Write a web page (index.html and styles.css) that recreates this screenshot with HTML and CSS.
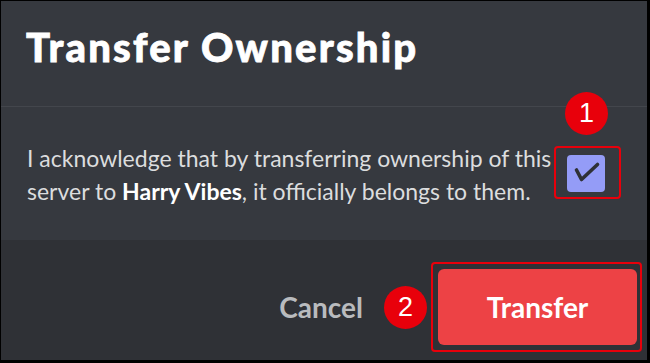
FILE: index.html
```html
<!DOCTYPE html>
<html lang="en">
<head>
    <meta charset="UTF-8">
    <meta name="viewport" content="width=device-width, initial-scale=1.0">
    <title>Transfer Ownership</title>
    <link rel="stylesheet" href="styles.css">
</head>
<body>

<div class="modal">
    <div class="modal-header">
        <h1>Transfer Ownership</h1>
    </div>

    <div class="modal-body">
        <p class="ack">
            <span class="line">I acknowledge that by transferring ownership of this</span>
            <span class="line">server to <strong>Harry Vibes</strong>, it officially belongs to them.</span>
        </p>
        <div class="check-wrap highlight">
            <span class="badge badge-top">1</span>
            <div class="checkbox">
                <svg width="38" height="37" viewBox="0 0 38 37">
                    <path d="M9.5 15 L14.5 24.5 L30.5 9.5" fill="none" stroke="#2f3136" stroke-width="3.6" stroke-linecap="round" stroke-linejoin="round"/>
                </svg>
            </div>
        </div>
    </div>

    <div class="modal-footer">
        <button class="btn-cancel">Cancel</button>
        <span class="badge">2</span>
        <div class="highlight btn-wrap">
            <button class="btn-transfer">Transfer</button>
        </div>
    </div>
</div>

</body>
</html>
```

FILE: styles.css
```css
body {
    margin: 0;
    font-family: Lato, "Liberation Sans", sans-serif;
    background: #000;
}
.modal {
    width: 650px;
    height: 363px;
    box-sizing: border-box;
    border-style: solid;
    border-color: #000;
    border-width: 1px 3px 3px 1px;
    background-color: #36393f;
    display: flex;
    flex-direction: column;
}
.modal-header {
    height: 106px;
    padding: 22px 0 0 25px;
    box-sizing: border-box;
    border-bottom: 1px solid #43464c;
}
.modal-header h1 {
    margin: 0;
    font-size: 40px;
    line-height: 48px;
    font-weight: 900;
    letter-spacing: 2.2px;
    -webkit-text-stroke: 0.8px #fff;
    color: #fff;
}
.modal-body {
    height: 133px;
    display: flex;
    align-items: flex-start;
    padding: 35px 0 0 26px;
    box-sizing: border-box;
}
.ack {
    margin: 0;
    width: 526px;
    font-size: 23px;
    line-height: 33px;
    color: #dcddde;
}
.ack .line {
    display: block;
    white-space: nowrap;
}
.ack strong {
    color: #fff;
    font-weight: 700;
}
.highlight {
    border: 2px solid #e8000b;
    border-radius: 4px;
}
.check-wrap {
    position: relative;
    margin: 4px 0 0 1px;
    padding: 7px 14px 5px 11px;
}
.checkbox {
    width: 38px;
    height: 37px;
    border-radius: 4px;
    background-color: #949cf7;
}
.checkbox svg {
    display: block;
}
.badge {
    width: 43px;
    height: 43px;
    border-radius: 50%;
    background-color: #e8000b;
    color: #fff;
    font-family: "Liberation Sans", Arial, sans-serif;
    font-size: 27px;
    line-height: 43px;
    text-align: center;
    flex-shrink: 0;
}
.badge-top {
    position: absolute;
    left: 9px;
    top: -56px;
}
.modal-footer {
    flex: 1;
    background-color: #2f3136;
    display: flex;
    justify-content: flex-end;
    align-items: center;
    padding: 14px 5px 0 0;
}
.btn-cancel {
    background: none;
    border: none;
    padding: 0;
    font-family: Lato, "Liberation Sans", sans-serif;
    font-size: 28px;
    font-weight: 700;
    color: #b9bbbe;
}
.modal-footer .badge {
    margin: 0 4px 0 21px;
}
.btn-wrap {
    padding: 5px 3px 5px 5px;
}
.btn-transfer {
    display: block;
    width: 199px;
    height: 76px;
    border: none;
    border-radius: 6px;
    background-color: #ed4245;
    color: #fff;
    font-family: Lato, "Liberation Sans", sans-serif;
    font-size: 28px;
    font-weight: 700;
}
```
